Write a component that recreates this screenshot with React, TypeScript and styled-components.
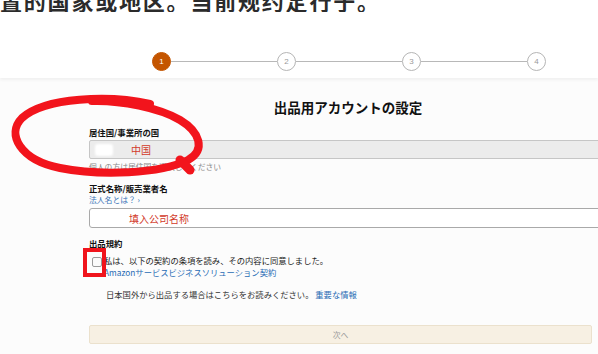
import React from "react";
import styled, { createGlobalStyle } from "styled-components";

const Global = createGlobalStyle`
  html, body { margin: 0; padding: 0; background: #ffffff; }
  body { width: 598px; height: 354px; overflow: hidden; font-family: "Noto Sans CJK JP", "Noto Sans", sans-serif; }
`;

const Page = styled.div`
  position: relative;
  width: 598px;
  height: 354px;
  overflow: hidden;
  background: #fcfcfc;
`;

const TopCaption = styled.div`
  height: 12px;
  overflow: hidden;
  background: #ffffff;
`;

const CaptionText = styled.div`
  margin-top: -12px;
  font-family: "Noto Sans CJK SC", sans-serif;
  font-size: 22px;
  line-height: 24px;
  font-weight: 700;
  letter-spacing: 1.8px;
  color: #2b2b2b;
  white-space: nowrap;
`;

const Header = styled.div`
  height: 66px;
  box-sizing: border-box;
  padding-top: 40px;
  background: #ffffff;
  box-shadow: 0 2px 3px rgba(0, 0, 0, 0.05);
`;

const Stepper = styled.div`
  display: flex;
  align-items: center;
  margin-left: 152px;
`;

const Step = styled.div<{ $active?: boolean }>`
  width: 19px;
  height: 19px;
  box-sizing: border-box;
  border-radius: 50%;
  display: flex;
  align-items: center;
  justify-content: center;
  font-family: "Liberation Sans", Arial, sans-serif;
  font-size: 8px;
  background: ${(p) => (p.$active ? "#c45500" : "#ffffff")};
  color: ${(p) => (p.$active ? "#ffffff" : "#9a9a9a")};
  border: 1px solid ${(p) => (p.$active ? "#c45500" : "#b5b5b5")};
`;

const StepLine = styled.div`
  width: 106px;
  height: 1px;
  background: #b8b8b8;
`;

const Main = styled.div`
  padding: 20px 0 0 89px;
`;

const Title = styled.div`
  width: 518px;
  text-align: center;
  font-size: 13.5px;
  line-height: 18px;
  font-weight: 700;
  color: #111;
`;

const Label = styled.div<{ $mt: number }>`
  margin-top: ${(p) => p.$mt}px;
  font-size: 8.4px;
  line-height: 12px;
  font-weight: 700;
  color: #111;
`;

const SelectBox = styled.div`
  margin-top: 2px;
  width: 520px;
  height: 19px;
  box-sizing: border-box;
  background: #ececec;
  border: 1px solid #c6c6c6;
  border-radius: 2px;
  display: flex;
  align-items: center;
  padding-left: 5px;
`;

const Redacted = styled.div`
  width: 18px;
  height: 12px;
  border-radius: 3px;
  background: #ffffff;
  filter: blur(1px);
  margin-right: 18px;
`;

const RedValue = styled.span<{ $size: number }>`
  font-family: "Noto Sans CJK SC", sans-serif;
  font-size: ${(p) => p.$size}px;
  color: #d23a2a;
`;

const Hint = styled.div`
  margin-top: 2px;
  font-size: 7.8px;
  line-height: 12px;
  color: #8a8a8a;
`;

const HelpLink = styled.div`
  font-size: 7.8px;
  line-height: 12px;
  color: #3a74b8;
`;

const InputBox = styled.div`
  margin-top: 2px;
  width: 520px;
  height: 20px;
  box-sizing: border-box;
  background: #ffffff;
  border: 1px solid #a9a9a9;
  border-radius: 3px;
  display: flex;
  align-items: center;
  padding-left: 39px;
`;

const AgreeRow = styled.div`
  margin-top: 5px;
  display: flex;
  align-items: flex-start;
  gap: 2px;
`;

const CheckWrap = styled.div`
  position: relative;
  margin: 3px 0 0 3px;
  width: 10px;
  height: 10px;
`;

const Checkbox = styled.div`
  width: 10px;
  height: 10px;
  box-sizing: border-box;
  border: 1px solid #9a9a9a;
  border-radius: 2px;
  background: #fafafa;
`;

const RedBox = styled.div`
  position: absolute;
  left: -9px;
  top: -9px;
  width: 23px;
  height: 29px;
  box-sizing: border-box;
  border: 4px solid #f0141c;
`;

const AgreeText = styled.div`
  font-size: 8.3px;
  line-height: 12px;
  color: #222;
`;

const BlueLink = styled.span`
  color: #2a6cb5;
`;

const Info = styled.div`
  margin-top: 10px;
  padding-left: 17px;
  font-size: 8.3px;
  line-height: 12px;
  color: #333;
`;

const NextButton = styled.div`
  margin-top: 25px;
  width: 503px;
  height: 19px;
  box-sizing: border-box;
  background: #f7f0e3;
  border: 1px solid #ebe1cd;
  border-radius: 2px;
  display: flex;
  align-items: center;
  justify-content: center;
  font-size: 7.8px;
  color: #9a9a9a;
`;

const Marker = styled.svg`
  position: absolute;
  left: 0;
  top: 0;
  pointer-events: none;
`;

export default function App() {
  return (
    <Page>
      <Global />
      <TopCaption>
        <CaptionText>置的国家或地区。当前规约定行于。</CaptionText>
      </TopCaption>
      <Header>
        <Stepper>
          <Step $active>1</Step>
          <StepLine />
          <Step>2</Step>
          <StepLine />
          <Step>3</Step>
          <StepLine />
          <Step>4</Step>
        </Stepper>
      </Header>
      <Main>
        <Title>出品用アカウントの設定</Title>
        <Label $mt={10}>居住国/事業所の国</Label>
        <SelectBox>
          <Redacted />
          <RedValue $size={10}>中国</RedValue>
        </SelectBox>
        <Hint>個人の方は居住国を選択してください</Hint>
        <Label $mt={9}>正式名称/販売業者名</Label>
        <HelpLink>法人名とは？ ›</HelpLink>
        <InputBox>
          <RedValue $size={10}>填入公司名称</RedValue>
        </InputBox>
        <Label $mt={9}>出品規約</Label>
        <AgreeRow>
          <CheckWrap>
            <Checkbox />
            <RedBox />
          </CheckWrap>
          <AgreeText>
            私は、以下の契約の条項を読み、その内容に同意しました。
            <br />
            <BlueLink>Amazonサービスビジネスソリューション契約</BlueLink>
          </AgreeText>
        </AgreeRow>
        <Info>
          日本国外から出品する場合はこちらをお読みください。 <BlueLink>重要な情報</BlueLink>
        </Info>
        <NextButton>次へ</NextButton>
      </Main>
      <Marker width="220" height="190" viewBox="0 0 220 190">
        <path
          d="M150 104 C110 95 45 97 22 118 C6 134 20 160 60 168 C100 176 160 174 188 160 C206 150 200 132 180 120 C160 108 120 100 92 101"
          fill="none"
          stroke="#f2141c"
          strokeWidth="8"
          strokeLinecap="round"
          strokeLinejoin="round"
        />
        <path d="M180 160 C184 164 188 168 190 170" fill="none" stroke="#f2141c" strokeWidth="9" strokeLinecap="round" />
      </Marker>
    </Page>
  );
}
